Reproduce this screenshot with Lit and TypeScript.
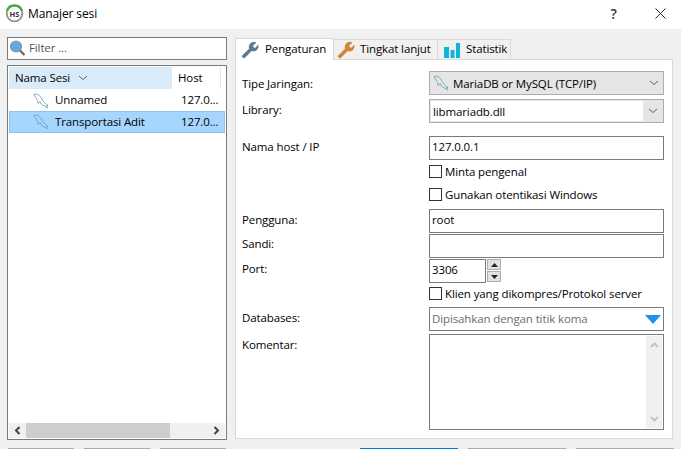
import { LitElement, html, css, svg } from "lit";
import { customElement } from "lit/decorators.js";

const dolphin = (fill: string) => html`<svg class="dolphin" width="16" height="16" viewBox="0 0 16 16">
  <path d="M1 1.5 C4 0.5 6.5 2 8 4.5 C9.5 7 10.5 9 12.5 10.5 L15 12.5 L13.5 12.6 L14.5 15 L11.5 12.8 C9 12.3 7.8 10.5 7 8.5 C6.5 10 5.5 10.5 5 10.5 C5 8.5 4.5 7 3.5 5.5 C2.5 4 1.5 3 1 1.5 Z"
    fill="${fill}" stroke="#6fa3b5" stroke-width="0.9" stroke-linejoin="round"/>
</svg>`;

const wrench = (c: string, d: string) => html`<svg width="18" height="18" viewBox="0 0 18 18">
  <path d="M1.5 14.6 L8.4 7.8 C7.6 5.2 8.6 2.6 11 1.6 C12.4 1 13.8 1.2 15 1.7 L11.8 4.6 L12.3 6.6 L14.3 7.2 L17 4.2 C17.5 6.2 16.7 8.4 14.8 9.5 C13.4 10.3 11.9 10.2 10.5 9.7 L4 16.4 C3.4 17 2.4 17 1.8 16.4 C1.2 15.9 1 15.2 1.5 14.6 Z" fill="${c}" stroke="${d}" stroke-width="0.5"/>
</svg>`;

const chevron = svg`<path d="M1 1 L5 4.5 L9 1" fill="none" stroke="#606060" stroke-width="1"/>`;
const chev = html`<svg class="chev" width="10" height="6" viewBox="0 0 10 6">${chevron}</svg>`;

@customElement("app-root")
export class AppRoot extends LitElement {
  static styles = css`
    :host {
      display: block;
      width: 681px;
      height: 449px;
      overflow: hidden;
      background: #f0f0f0;
      font-family: "Open Sans", "Noto Sans", sans-serif;
      font-size: 11.5px;
      color: #000;
      letter-spacing: -0.12px;
    }
    .title {
      height: 29px;
      background: #fff;
      display: flex;
      align-items: center;
      padding: 0 15px 2px 5px;
      box-sizing: border-box;
      gap: 4px;
    }
    .title .name { flex: 1; font-size: 12px; }
    .help { font-size: 14px; width: 17px; text-align: center; font-weight: 600; color: #333; margin-right: 29px; }
    .main {
      display: flex;
      padding: 8px 8px 0 7px;
      height: 411px;
      box-sizing: border-box;
    }
    .left { width: 220px; margin-right: 8px; display: flex; flex-direction: column; gap: 5px; }
    .filter {
      height: 23px; box-sizing: border-box;
      background: #fff; border: 1px solid #7a7a7a;
      display: flex; align-items: center; gap: 3px; padding: 0 0 2px 1px; color: #555;
    }
    .tree {
      height: 375px; box-sizing: border-box;
      background: #fff; border: 1px solid #7a7a7a; padding: 1px;
      display: flex; flex-direction: column;
    }
    .thead { display: flex; height: 22px; align-items: center; margin-bottom: 1px; }
    .th1 { width: 163px; height: 100%; background: #d9ebf9; display: flex; align-items: center; padding: 0 0 2px 6px; box-sizing: border-box; gap: 8px; }
    .th1 .chev { margin-top: 1px; }
    .th2 { width: 49px; height: 100%; padding: 0 0 2px 6px; box-sizing: border-box; display: flex; align-items: center; border-right: 1px solid #e5e5e5; }
    .row { height: 21px; display: flex; align-items: center; padding-left: 24px; box-sizing: border-box; }
    .row span { padding-bottom: 2px; }
    .row .rname { width: 126px; margin-left: 6px; }
    .row.sel { background: #a6d5fd; border: 1px solid #8cc4f0; padding-left: 23px; height: 22px; }
    .rows { flex: 1; }
    .hbar { height: 15px; background: #f0f0f0; display: flex; align-items: center; justify-content: space-between; }
    .hthumb { width: 144px; height: 15px; background: #cdcdcd; }
    .hfill { flex: 1; }
    .hbar svg { margin: 0 5px; flex: none; }
    .panel { flex: 1; display: flex; flex-direction: column; }
    .tabs { display: flex; height: 22px; align-items: flex-end; padding-left: 1px; }
    .tab {
      height: 20px; box-sizing: border-box; background: #f0f0f0;
      border: 1px solid #d9d9d9; border-bottom: none; border-left: none;
      display: flex; align-items: center; gap: 5px; padding-left: 3px;
    }
    .tab span { padding-bottom: 2px; }
    .tab.active { height: 22px; background: #fff; border-left: 1px solid #d9d9d9; width: 99px; padding-left: 5px; gap: 6px; margin-left: -1px; position: relative; top: 1px; }
    .t2 { width: 104px; }
    .t3 { width: 73px; padding-left: 6px; gap: 6px; }
    .body {
      height: 380px; box-sizing: border-box; background: #fff;
      border: 1px solid #d9d9d9; padding: 11px 8px 0 6px;
      display: grid; grid-template-columns: 187px 235px; align-content: start;
    }
    .lbl { padding-top: 3px; }
    .lbl.first { padding-top: 5px; }
    .lbl.tight { padding-top: 2px; }
    .r { height: 24px; box-sizing: border-box; }
    .mt4 { margin-top: 4px; }
    .mt3 { margin-top: 3px; }
    .mt13 { margin-top: 13px; }
    .mt1 { margin-top: 1px; }
    .input {
      border: 1px solid #7a7a7a; background: #fff; display: flex; align-items: center; padding: 0 0 3px 2px; height: 24px; box-sizing: border-box;
    }
    .combo {
      border: 1px solid #adadad; background: #e5e5e5; display: flex; align-items: center; height: 24px; box-sizing: border-box; padding-left: 3px; gap: 4px;
    }
    .combo .ctext { flex: 1; }
    .combo .chev { margin-right: 4px; }
    .combo.edit { padding: 1px 0 1px 1px; }
    .combo.edit .ctext { background: #fff; height: 100%; display: flex; align-items: center; padding-left: 2px; }
    .combo.edit .chev { margin: 0 5px 0 1px; }
    .check { display: flex; align-items: center; gap: 3px; height: 23px; box-sizing: border-box; }
    .check.short { height: 20px; }
    .box { width: 13px; height: 13px; border: 1px solid #333; background: #fff; box-sizing: border-box; flex: none; }
    .port { display: flex; gap: 1px; height: 24px; }
    .port .input { width: 57px; }
    .spin { width: 14px; display: flex; flex-direction: column; gap: 1px; height: 23px; }
    .spin div { flex: 1; background: #e1e1e1; border: 1px solid #adadad; display: flex; align-items: center; justify-content: center; }
    .db { color: #6d6d6d; justify-content: space-between; height: 24px; padding-bottom: 0; }
    .db span { padding-bottom: 2px; }
    .db svg { margin-right: 2px; }
    .memo {
      height: 96px; box-sizing: border-box; border: 1px solid #7a7a7a; background: #fff; display: flex; justify-content: flex-end; padding: 1px;
    }
    .vbar { width: 16px; background: #f0f0f0; display: flex; flex-direction: column; justify-content: space-between; align-items: center; padding: 6px 0; box-sizing: border-box; }
    .buttons { display: flex; padding: 8px 0 0 8px; }
    .btn { height: 24px; width: 66px; flex: none; background: #e1e1e1; border-top: 1px solid #adadad; box-sizing: border-box; margin-right: 10px; }
    .btn.wide { width: 98px; }
    .btn.pri { border-top-color: #0078d7; }
    .spacer { width: 124px; flex: none; }
  `;

  render() {
    return html`
      <div class="title">
        <svg width="19" height="19" viewBox="0 0 19 19">
          <circle cx="9.5" cy="9.5" r="7.8" fill="#fff" stroke="#8f9a85" stroke-width="1.8"/>
          <path d="M2 7 A7.8 7.8 0 0 1 17 7" fill="none" stroke="#3fa648" stroke-width="2.2"/>
          <text x="9.5" y="12.5" font-size="7.5" font-weight="700" text-anchor="middle" fill="#333" letter-spacing="0">HS</text>
        </svg>
        <span class="name">Manajer sesi</span>
        <span class="help">?</span>
        <svg width="11" height="11" viewBox="0 0 11 11"><path d="M0.5 0.5 L10.5 10.5 M10.5 0.5 L0.5 10.5" stroke="#222" stroke-width="1"/></svg>
      </div>
      <div class="main">
        <div class="left">
          <div class="filter">
            <svg width="17" height="18" viewBox="0 0 17 18">
              <circle cx="7" cy="7.5" r="5.5" fill="#5ea9e6" stroke="#8a9aa5" stroke-width="1.2"/>
              <path d="M11 11.5 L15.5 16" stroke="#666" stroke-width="2.2"/>
            </svg>
            <span>Filter ...</span>
          </div>
          <div class="tree">
            <div class="thead">
              <div class="th1"><span>Nama Sesi</span>${chev}</div>
              <div class="th2">Host</div>
            </div>
            <div class="rows">
              <div class="row">${dolphin("#fff")}<span class="rname">Unnamed</span><span>127.0...</span></div>
              <div class="row sel">${dolphin("#a6d5fd")}<span class="rname">Transportasi Adit</span><span>127.0...</span></div>
            </div>
            <div class="hbar">
              <svg width="7" height="9" viewBox="0 0 7 9"><path d="M5.5 1 L2 4.5 L5.5 8" fill="none" stroke="#444" stroke-width="2"/></svg>
              <div class="hthumb"></div>
              <div class="hfill"></div>
              <svg width="7" height="9" viewBox="0 0 7 9"><path d="M1.5 1 L5 4.5 L1.5 8" fill="none" stroke="#444" stroke-width="2"/></svg>
            </div>
          </div>
        </div>
        <div class="panel">
          <div class="tabs">
            <div class="tab active">${wrench("#5b7a90", "#4a6578")}<span>Pengaturan</span></div>
            <div class="tab t2">${wrench("#d8842c", "#b96c1e")}<span>Tingkat lanjut</span></div>
            <div class="tab t3">
              <svg width="16" height="16" viewBox="0 0 16 16">
                <rect x="0" y="5" width="5" height="11" fill="#0fb5d8"/>
                <rect x="6.5" y="8" width="4" height="8" fill="#0fb5d8"/>
                <rect x="12" y="1" width="4" height="15" fill="#0fb5d8"/>
              </svg>
              <span>Statistik</span>
            </div>
          </div>
          <div class="body">
            <div class="r lbl first">Tipe Jaringan:</div>
            <div class="combo">${dolphin("#e5e5e5")}<span class="ctext">MariaDB or MySQL (TCP/IP)</span>${chev}</div>

            <div class="r lbl mt4">Library:</div>
            <div class="combo edit mt4"><span class="ctext">libmariadb.dll</span>${chev}</div>

            <div class="r lbl mt13">Nama host / IP</div>
            <div class="input mt13">127.0.0.1</div>

            <div></div>
            <div class="check"><span class="box"></span>Minta pengenal</div>
            <div></div>
            <div class="check"><span class="box"></span>Gunakan otentikasi Windows</div>

            <div class="r lbl mt3">Pengguna:</div>
            <div class="input mt3">root</div>

            <div class="r lbl tight mt1">Sandi:</div>
            <div class="input mt1"></div>

            <div class="r lbl tight mt1">Port:</div>
            <div class="port mt1">
              <div class="input">3306</div>
              <div class="spin">
                <div><svg width="7" height="4" viewBox="0 0 7 4"><path d="M3.5 0 L7 4 H0 Z" fill="#222"/></svg></div>
                <div><svg width="7" height="4" viewBox="0 0 7 4"><path d="M0 0 H7 L3.5 4 Z" fill="#222"/></svg></div>
              </div>
            </div>

            <div></div>
            <div class="check short"><span class="box"></span>Klien yang dikompres/Protokol server</div>

            <div class="r lbl mt4">Databases:</div>
            <div class="input db mt4">
              <span>Dipisahkan dengan titik koma</span>
              <svg width="16" height="9" viewBox="0 0 16 9"><path d="M0 0 H16 L8 9 Z" fill="#1e90e8"/></svg>
            </div>

            <div class="r lbl mt3">Komentar:</div>
            <div class="memo mt3">
              <div class="vbar">
                <svg width="9" height="6" viewBox="0 0 9 6"><path d="M1 5 L4.5 1.5 L8 5" fill="none" stroke="#c4c4c4" stroke-width="2"/></svg>
                <svg width="9" height="6" viewBox="0 0 9 6"><path d="M1 1 L4.5 4.5 L8 1" fill="none" stroke="#c4c4c4" stroke-width="2"/></svg>
              </div>
            </div>
          </div>
        </div>
      </div>
      <div class="buttons">
        <div class="btn"></div><div class="btn"></div><div class="btn"></div>
        <div class="spacer"></div>
        <div class="btn wide pri"></div><div class="btn wide"></div><div class="btn wide"></div>
      </div>
    `;
  }
}
